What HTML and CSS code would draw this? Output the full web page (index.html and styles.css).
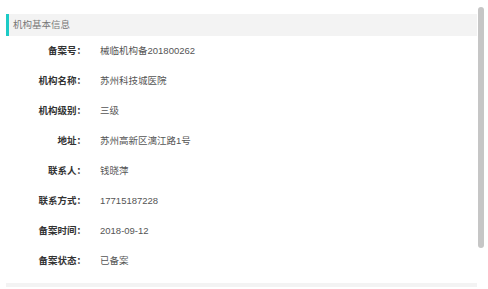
FILE: index.html
```html
<!DOCTYPE html>
<html lang="zh">
<head>
<meta charset="utf-8">
<link rel="stylesheet" href="styles.css">
</head>
<body>
<div class="page">
  <div class="content">
    <div class="section-title">机构基本信息</div>
    <div class="info-list">
      <div class="row"><span class="label">备案号：</span><span class="value">械临机构备201800262</span></div>
      <div class="row"><span class="label">机构名称：</span><span class="value">苏州科技城医院</span></div>
      <div class="row"><span class="label">机构级别：</span><span class="value">三级</span></div>
      <div class="row"><span class="label">地址：</span><span class="value">苏州高新区漓江路1号</span></div>
      <div class="row"><span class="label">联系人：</span><span class="value">钱晓萍</span></div>
      <div class="row"><span class="label">联系方式：</span><span class="value">17715187228</span></div>
      <div class="row"><span class="label">备案时间：</span><span class="value">2018-09-12</span></div>
      <div class="row"><span class="label">备案状态：</span><span class="value">已备案</span></div>
    </div>
    <div class="next-section"></div>
  </div>
  <div class="scroll-track"><div class="scroll-thumb"></div></div>
</div>
</body>
</html>
```
FILE: styles.css
```css
html, body {
  margin: 0;
  padding: 0;
  background: #fff;
}
body {
  font-family: "Liberation Sans", "Noto Sans CJK SC", sans-serif;
  font-size: 9.5px;
  width: 488px;
  height: 289px;
  overflow: hidden;
}
.page {
  display: flex;
  padding-left: 6px;
  height: 289px;
  box-sizing: border-box;
}
.content {
  width: 472px;
  padding-top: 14px;
  display: flex;
  flex-direction: column;
}
.section-title {
  height: 22px;
  line-height: 22px;
  background: #f3f3f3;
  border-left: 3px solid #1ccbc6;
  padding-left: 4px;
  color: #777;
  font-size: 9.5px;
}
.info-list {
  display: flex;
  flex-direction: column;
  margin-top: -1px;
}
.row {
  display: flex;
  align-items: center;
  height: 30px;
}
.label {
  width: 80px;
  text-align: right;
  color: #333;
  font-weight: bold;
}
.value {
  margin-left: 14px;
  color: #555;
}
.next-section {
  margin-top: 8px;
  height: 4px;
  background: #f3f3f3;
}
.scroll-track {
  width: 10px;
  display: flex;
  justify-content: flex-start;
  padding-left: 1px;
}
.scroll-thumb {
  margin-top: 7px;
  width: 6px;
  height: 241px;
  background: #c6c6c6;
  border-radius: 3px;
}
```
